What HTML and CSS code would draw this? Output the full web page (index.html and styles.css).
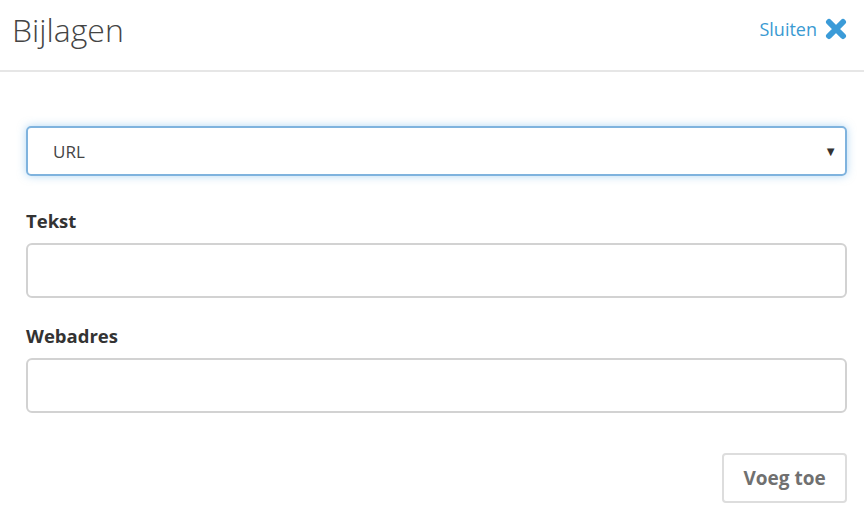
FILE: index.html
```html
<!DOCTYPE html>
<html lang="nl">

<head>
    <meta charset="UTF-8">
    <title>Bijlagen</title>
    <link rel="stylesheet" href="styles.css">
</head>

<body>
    <div class="header">
        <h1>Bijlagen</h1>
        <a class="close" href="#">Sluiten
            <svg width="22" height="22" viewBox="0 0 22 22">
                <path d="M4 4 L18 18 M18 4 L4 18" stroke="#3b9bd8" stroke-width="6" stroke-linecap="round" />
            </svg>
        </a>
    </div>
    <div class="body">
        <div class="select">
            <span>URL</span>
            <span class="caret">▼</span>
        </div>
        <label>Tekst</label>
        <div class="input"></div>
        <label>Webadres</label>
        <div class="input"></div>
        <div class="footer">
            <button>Voeg toe</button>
        </div>
    </div>
</body>

</html>
```

FILE: styles.css
```css
* {
    margin: 0;
    padding: 0;
    box-sizing: border-box;
}

body {
    font-family: "Open Sans", sans-serif;
    background: #fff;
    color: #333;
}

.header {
    display: flex;
    justify-content: space-between;
    align-items: center;
    height: 72px;
    padding: 0 17px 12px 12px;
    border-bottom: 2px solid #e6e6e6;
}

h1 {
    font-weight: 300;
    font-size: 32px;
    color: #444;
}

.close {
    display: flex;
    align-items: center;
    gap: 8px;
    color: #3a9ad2;
    font-size: 18px;
    text-decoration: none;
}

.body {
    padding: 54px 17px 0 26px;
}

.select {
    display: flex;
    justify-content: space-between;
    align-items: center;
    height: 50px;
    margin-bottom: 32px;
    padding: 0 8px 0 25px;
    border: 2px solid #7fb3de;
    border-radius: 5px;
    box-shadow: 0 0 8px rgba(102, 175, 233, 0.5);
    font-size: 17px;
    color: #444;
}

.caret {
    font-size: 13px;
    color: #333;
}

label {
    display: block;
    margin-top: 25px;
    font-size: 18.5px;
    font-weight: 700;
    color: #333;
}

.input {
    margin-top: 10px;
    height: 55px;
    border: 2px solid #d2d2d2;
    border-radius: 6px;
}

.footer {
    display: flex;
    justify-content: flex-end;
    margin-top: 40px;
}

button {
    width: 125px;
    height: 50px;
    border: 2px solid #ddd;
    border-radius: 4px;
    background: #fff;
    font-family: "Open Sans", sans-serif;
    font-size: 19px;
    font-weight: 700;
    color: #707070;
}
```
